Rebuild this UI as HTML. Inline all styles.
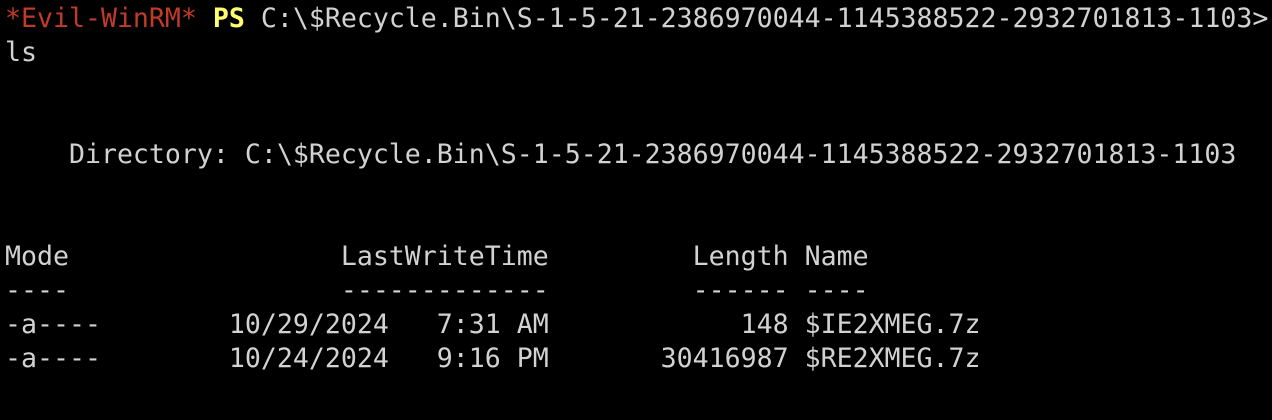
<!DOCTYPE html>
<html><head><meta charset="utf-8"><style>
html,body{margin:0;padding:0;background:#000;width:1272px;height:420px;overflow:hidden}
pre{margin:0;position:absolute;left:5px;top:2px;font-family:"DejaVu Sans Mono","Liberation Mono",monospace;font-size:26.57px;line-height:34px;color:#d2d2d2;white-space:pre}
.r{color:#c23a28}.y{color:#ffff6e;font-weight:bold}
</style></head><body><pre><span class="r">*Evil-WinRM*</span> <span class="y">PS</span> C:\$Recycle.Bin\S-1-5-21-2386970044-1145388522-2932701813-1103>
ls


    Directory: C:\$Recycle.Bin\S-1-5-21-2386970044-1145388522-2932701813-1103


Mode                 LastWriteTime         Length Name
----                 -------------         ------ ----
-a----        10/29/2024   7:31 AM            148 $IE2XMEG.7z
-a----        10/24/2024   9:16 PM       30416987 $RE2XMEG.7z
</pre></body></html>
